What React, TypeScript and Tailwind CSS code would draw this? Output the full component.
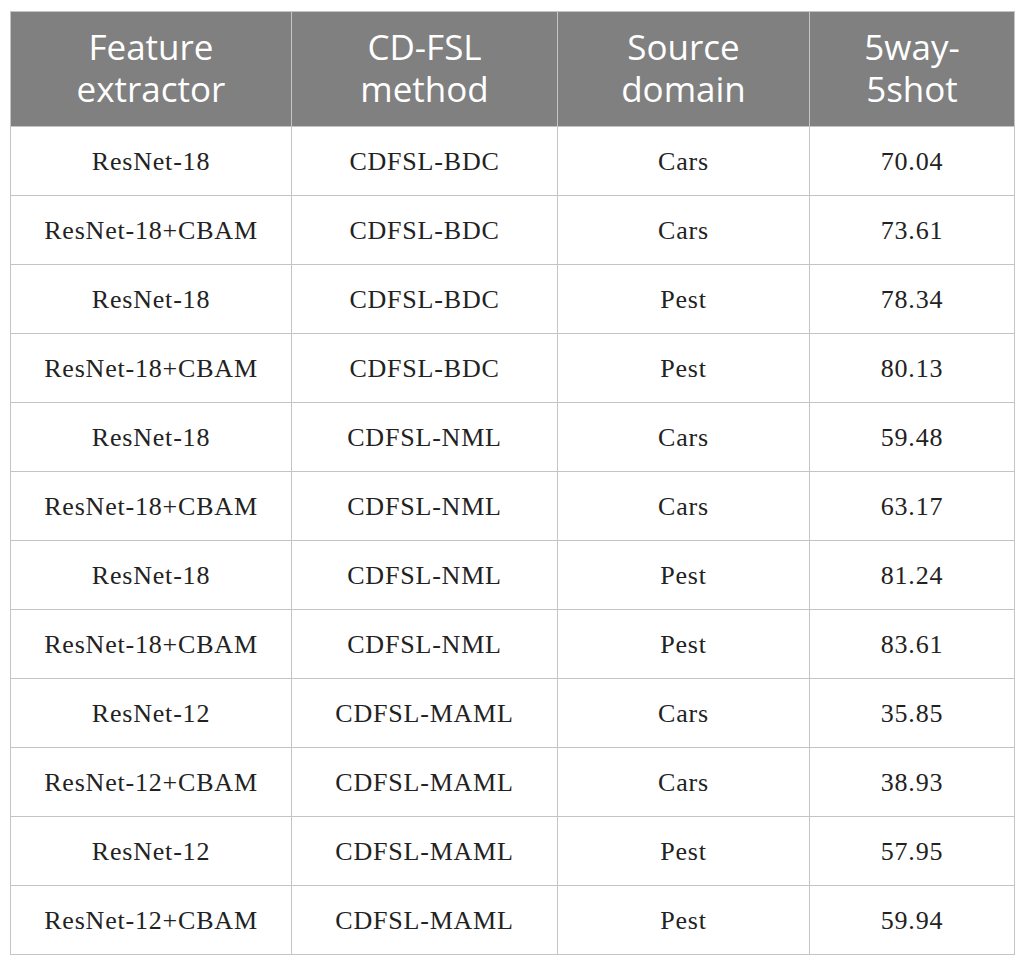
import React from "react";

const rows: [string, string, string, string][] = [
  ["ResNet-18", "CDFSL-BDC", "Cars", "70.04"],
  ["ResNet-18+CBAM", "CDFSL-BDC", "Cars", "73.61"],
  ["ResNet-18", "CDFSL-BDC", "Pest", "78.34"],
  ["ResNet-18+CBAM", "CDFSL-BDC", "Pest", "80.13"],
  ["ResNet-18", "CDFSL-NML", "Cars", "59.48"],
  ["ResNet-18+CBAM", "CDFSL-NML", "Cars", "63.17"],
  ["ResNet-18", "CDFSL-NML", "Pest", "81.24"],
  ["ResNet-18+CBAM", "CDFSL-NML", "Pest", "83.61"],
  ["ResNet-12", "CDFSL-MAML", "Cars", "35.85"],
  ["ResNet-12+CBAM", "CDFSL-MAML", "Cars", "38.93"],
  ["ResNet-12", "CDFSL-MAML", "Pest", "57.95"],
  ["ResNet-12+CBAM", "CDFSL-MAML", "Pest", "59.94"],
];

const headers = [
  ["Feature", "extractor"],
  ["CD-FSL", "method"],
  ["Source", "domain"],
  ["5way-", "5shot"],
];

export default function App() {
  return (
    <div className="bg-white w-[1025px] h-[968px] pt-[11px] pl-[10px]">
      <table className="border-collapse table-fixed w-[1004px]">
        <colgroup>
          <col className="w-[281px]" />
          <col className="w-[266px]" />
          <col className="w-[252px]" />
          <col className="w-[205px]" />
        </colgroup>
        <thead>
          <tr className="h-[115px] bg-[#808080]">
            {headers.map((h, i) => (
              <th
                key={i}
                className="border border-[#c4c4c4] text-white font-normal text-center align-middle text-[35px] leading-[42px] font-['Open_Sans',sans-serif] pb-[3px]"
              >
                {h[0]}
                <br />
                {h[1]}
              </th>
            ))}
          </tr>
        </thead>
        <tbody>
          {rows.map((r, i) => (
            <tr key={i} className="h-[69px]">
              {r.map((c, j) => (
                <td
                  key={j}
                  className="border border-[#c4c4c4] text-center align-middle text-[#222] text-[26px] tracking-[0.8px] font-['Liberation_Serif',serif]"
                >
                  {c}
                </td>
              ))}
            </tr>
          ))}
        </tbody>
      </table>
    </div>
  );
}
